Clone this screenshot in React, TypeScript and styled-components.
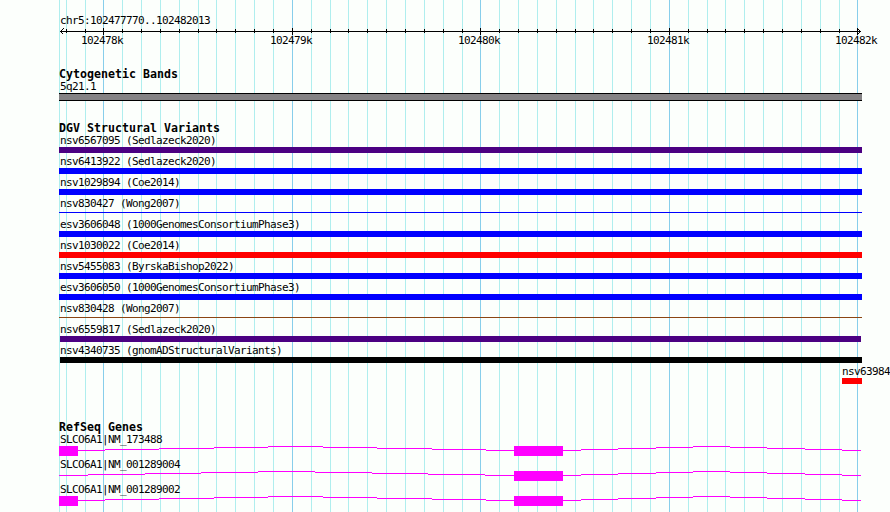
import React from "react";
import styled, { createGlobalStyle } from "styled-components";

const START = 102477770;
const END = 102482014;
const LEFT = 60;
const WIDTH = 800;

const toX = (pos: number) =>
  Math.round(LEFT + ((pos - START) * WIDTH) / (END - START));

const ticks: { x: number; major: boolean; pos: number }[] = [];
for (let pos = 102477800; pos <= 102482000; pos += 100) {
  ticks.push({ x: toX(pos), major: pos % 1000 === 0, pos });
}

const GlobalStyle = createGlobalStyle`
  body {
    margin: 0;
    background: #fcfffc;
    overflow: hidden;
  }
`;

const Page = styled.main`
  position: relative;
  width: 890px;
  height: 512px;
  overflow: hidden;
  color: #000;
  font-family: "DejaVu Sans Mono", monospace;
  font-size: 11px;
`;

const Grid = styled.svg`
  position: absolute;
  top: 0;
  left: 0;
  display: block;
`;

const Content = styled.div`
  position: relative;
  display: flex;
  flex-direction: column;
  padding: 15px 0 0 59px;
`;

const Label = styled.div<{ $start?: number }>`
  height: 12px;
  line-height: 12px;
  padding-left: 1px;
  margin-left: ${({ $start = 59 }) => $start - 59}px;
  letter-spacing: -0.622px;
  white-space: pre;
`;

const Ruler = styled.svg`
  display: block;
  height: 8px;
  width: 831px;
`;

const RulerLabels = styled.div`
  display: grid;
  grid-template-columns: 189px 188px 189px 188px 48px;
  height: 12px;
  line-height: 12px;
  margin: 0 0 0 22px;
  letter-spacing: -0.622px;
`;

const Track = styled.section<{ $gap: number }>`
  margin-top: ${({ $gap }) => $gap}px;
`;

const Heading = styled.h2`
  margin: 0;
  height: 13px;
  line-height: 13px;
  font-size: 11.6px;
  font-weight: bold;
  letter-spacing: 0.016px;
  white-space: pre;
`;

const Band = styled.div`
  width: 803px;
  height: 8px;
  box-sizing: border-box;
  background: #848284;
  border: solid #000;
  border-width: 1px 0;
`;

const VariantRow = styled.div`
  height: 21px;
`;

const Bar = styled.div<{
  $color: string;
  $thin?: boolean;
  $start?: number;
  $end?: number;
}>`
  height: ${({ $thin }) => ($thin ? 1 : 6)}px;
  margin-top: ${({ $thin }) => ($thin ? 2 : 0)}px;
  margin-left: ${({ $start = 59 }) => $start - 59}px;
  width: ${({ $start = 59, $end = 862 }) => $end - $start}px;
  background: ${({ $color }) => $color};
`;

const GeneRow = styled.div`
  height: 25px;
`;

const GeneModel = styled.svg`
  display: block;
  width: 803px;
  height: 10px;
`;

type Variant = {
  name: string;
  color: string;
  thin?: boolean;
  start?: number;
  end?: number;
};

const variants: Variant[] = [
  { name: "nsv6567095 (Sedlazeck2020)", color: "#4b0082" },
  { name: "nsv6413922 (Sedlazeck2020)", color: "#0000ff" },
  { name: "nsv1029894 (Coe2014)", color: "#0000ff" },
  { name: "nsv830427 (Wong2007)", color: "#0000ff", thin: true },
  { name: "esv3606048 (1000GenomesConsortiumPhase3)", color: "#0000ff" },
  { name: "nsv1030022 (Coe2014)", color: "#ff0000" },
  { name: "nsv5455083 (ByrskaBishop2022)", color: "#0000ff" },
  { name: "esv3606050 (1000GenomesConsortiumPhase3)", color: "#0000ff" },
  { name: "nsv830428 (Wong2007)", color: "#8b4513", thin: true },
  { name: "nsv6559817 (Sedlazeck2020)", color: "#4b0082", start: 60, end: 861 },
  { name: "nsv4340735 (gnomADStructuralVariants)", color: "#000", start: 60 },
  { name: "nsv63984", color: "#ff0000", start: 842 },
];

// x positions where an intron line moves by one pixel, peak in the middle
const intronA = [78, 105, 159, 214, 268, 323, 377, 432, 486, 514];
const intronB = [59, 88, 145, 201, 258, 315, 372, 428, 485, 514];
const intronC = [563, 581, 618, 656, 693, 730, 767, 805, 842, 861];

const exonA = [59, 78];
const exonB = [514, 563];

const genes = [
  { name: "SLCO6A1|NM_173488", exons: [exonA, exonB], introns: [intronA, intronC] },
  { name: "SLCO6A1|NM_001289004", exons: [exonB], introns: [intronB, intronC] },
  { name: "SLCO6A1|NM_001289002", exons: [exonA, exonB], introns: [intronA, intronC] },
];

const Intron = ({ steps }: { steps: number[] }) => (
  <>
    {steps.slice(0, -1).map((x, i) => (
      <rect key={x} x={x} y={Math.abs(4 - i)} width={steps[i + 1] - x} height={1} />
    ))}
  </>
);

const App = () => {
  return (
    <>
      <GlobalStyle />
      <Page>
        <Grid width="890" height="512">
          <rect x={59} width={1} height={512} fill="#afeeee" />
          {ticks.map(({ x, major }) => (
            <rect
              key={x}
              x={x}
              width={1}
              height={512}
              fill={major ? "#87ceeb" : "#afeeee"}
            />
          ))}
        </Grid>

        <Content>
          <Label>chr5:102477770..102482013</Label>
          <Ruler viewBox="59 27 831 8" shapeRendering="crispEdges">
            <rect x={60} y={31} width={801} height={1} />
            {ticks.map(({ x, major }) => (
              <rect
                key={x}
                x={x}
                y={major ? 28 : 29}
                width={1}
                height={major ? 7 : 4}
              />
            ))}
            <path d="M63.5 28.5L60.5 31.5L63.5 34.5M857.5 28.5L860.5 31.5L857.5 34.5" fill="none" stroke="#000" />
          </Ruler>
          <RulerLabels>
            {ticks
              .filter(({ major }) => major)
              .map(({ pos }) => (
                <span key={pos}>{pos / 1000}k</span>
              ))}
          </RulerLabels>

          <Track $gap={21}>
            <Heading>Cytogenetic Bands</Heading>
            <Label>5q21.1</Label>
            <Band />
          </Track>

          <Track $gap={21}>
            <Heading>DGV Structural Variants</Heading>
            {variants.map(({ name, color, thin, start, end }) => (
              <VariantRow key={name}>
                <Label $start={start === 842 ? 841 : 59}>{name}</Label>
                <Bar $color={color} $thin={thin} $start={start} $end={end} />
              </VariantRow>
            ))}
          </Track>

          <Track $gap={34}>
            <Heading>RefSeq Genes</Heading>
            {genes.map(({ name, exons, introns }) => (
              <GeneRow key={name}>
                <Label>{name}</Label>
                <GeneModel viewBox="59 0 803 10" fill="#ff00ff" shapeRendering="crispEdges">
                  {introns.map((steps) => (
                    <Intron key={steps[0]} steps={steps} />
                  ))}
                  {exons.map(([from, to]) => (
                    <rect key={from} x={from} width={to - from} height={10} />
                  ))}
                </GeneModel>
              </GeneRow>
            ))}
          </Track>
        </Content>
      </Page>
    </>
  );
};

export default App;
